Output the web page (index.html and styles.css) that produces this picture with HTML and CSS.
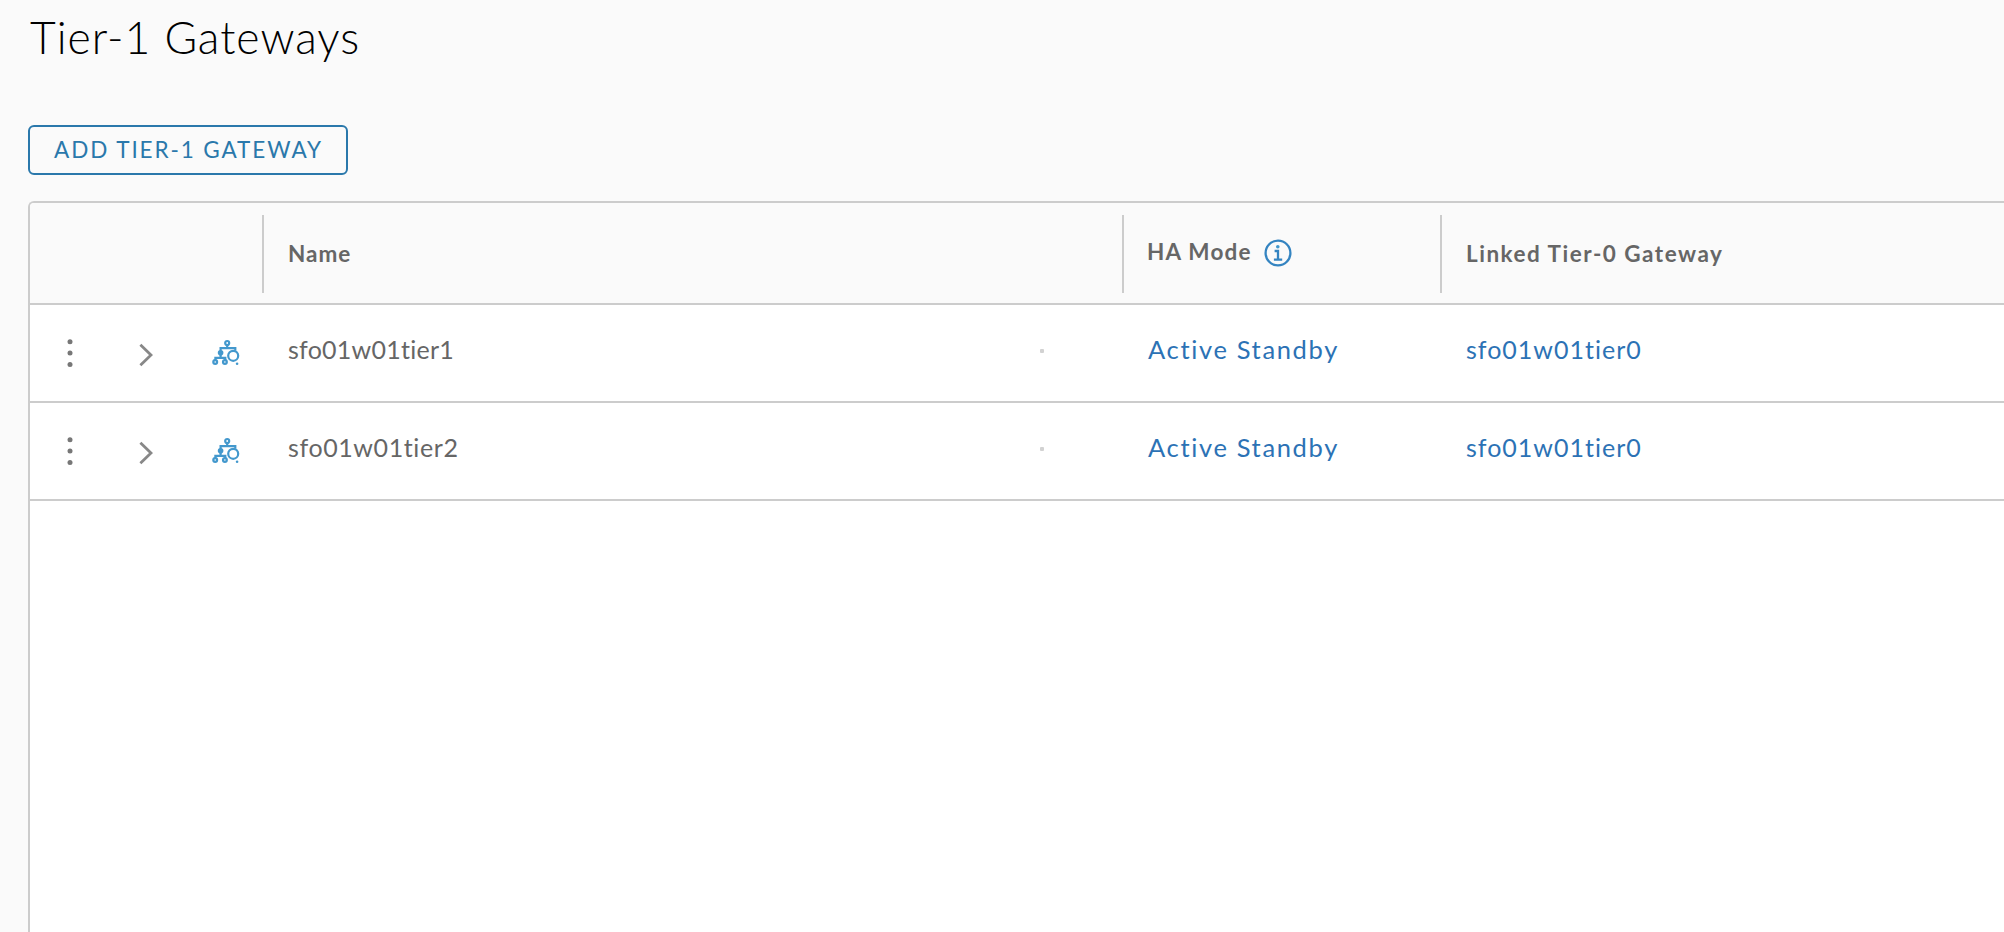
FILE: index.html
```html
<!DOCTYPE html>
<html lang="en">
<head>
<meta charset="utf-8">
<title>Tier-1 Gateways</title>
<link rel="stylesheet" href="styles.css">
</head>
<body>
<svg class="defs" width="0" height="0" aria-hidden="true">
  <symbol id="dots" viewBox="0 0 8 30"><circle cx="4" cy="3.7" r="2.5"/><circle cx="4" cy="15" r="2.5"/><circle cx="4" cy="26.4" r="2.5"/></symbol>
  <symbol id="chevron" viewBox="0 0 14 24"><path d="M1.4 1.8 12 12 1.4 22.2"/></symbol>
  <symbol id="topology" viewBox="0 0 28 28">
    <circle cx="15.2" cy="4" r="2"/>
    <path d="M15.2 6V9.3M8.6 12.5V9.1H23.3V11.8M8.6 16V19M3.4 21.5V18.9H13.3V21.5"/>
    <circle class="solid" cx="8.6" cy="13.7" r="2.8"/>
    <circle cx="3.2" cy="23" r="1.9"/><circle cx="12.9" cy="23" r="1.9"/>
    <circle cx="21.2" cy="16.8" r="5"/>
    <circle class="solid" cx="25.1" cy="24.7" r="1.3"/>
  </symbol>
</svg>
<main class="page">
  <h1 class="title">Tier-1 Gateways</h1>
  <button class="add-button"><span>ADD TIER-1 GATEWAY</span></button>
  <section class="grid">
    <div class="row head">
      <div class="actions"></div>
      <div class="cell"><span class="name-label">Name</span></div>
      <div class="cell raised"><span class="mode-label">HA Mode</span>
        <svg class="info" viewBox="0 0 28 28"><circle cx="14" cy="14" r="12.4"/><circle class="solid" cx="13.8" cy="7.8" r="1.8"/><path d="M10.6 12H14V20.6M9.9 20.7H18.2"/></svg>
      </div>
      <div class="cell"><span class="linked-label">Linked Tier-0 Gateway</span></div>
    </div>
    <div class="row">
      <div class="actions"><svg class="dots"><use href="#dots"/></svg><svg class="chevron"><use href="#chevron"/></svg><svg class="topology"><use href="#topology"/></svg></div>
      <div class="cell name first"><span>sfo01w01tier1</span><i class="mark"></i></div>
      <div class="cell"><a class="mode">Active Standby</a></div>
      <div class="cell"><a class="linked">sfo01w01tier0</a></div>
    </div>
    <div class="row">
      <div class="actions"><svg class="dots"><use href="#dots"/></svg><svg class="chevron"><use href="#chevron"/></svg><svg class="topology"><use href="#topology"/></svg></div>
      <div class="cell name"><span>sfo01w01tier2</span><i class="mark"></i></div>
      <div class="cell"><a class="mode">Active Standby</a></div>
      <div class="cell"><a class="linked">sfo01w01tier0</a></div>
    </div>
  </section>
</main>
</body>
</html>
```
FILE: styles.css
```css
* { box-sizing: border-box; }
body { margin: 0; background: #fafafa; font-family: Lato, "Open Sans", sans-serif; color: #666; overflow: hidden; }
.defs { display: block; }
.page { height: 932px; padding: 9px 0 0 28px; display: flex; flex-direction: column; align-items: flex-start; }
.title { margin: 0 0 0 2px; height: 56px; line-height: 56px; font-size: 44.5px; font-weight: 300; letter-spacing: 1px; color: #000; white-space: nowrap; }
.add-button { margin: 60px 0 26px; width: 320px; height: 50px; padding: 0 0 0 1px; border: 2px solid #2a78ab; border-radius: 6px; background: transparent; color: #2a78ab; font: 400 22.5px/46px Lato, sans-serif; letter-spacing: 1.9px; white-space: nowrap; }
.grid { width: 1976px; flex: 1; border: 2px solid #ccc; border-width: 2px 0 0 2px; border-radius: 6px 0 0 0; background: #fff; overflow: hidden; }
.row { display: grid; grid-template-columns: 232px 860px 318px 1fr; height: 98px; border-bottom: 2px solid #ccc; }
.head { height: 102px; background: #fafafa; padding: 12px 0 10px; font-size: 22.5px; font-weight: 700; }
.cell { display: flex; align-items: center; padding: 0 0 8px 26px; font-size: 25px; white-space: nowrap; }
.head .cell { height: 78px; border-left: 2px solid #ccc; padding: 0 0 1px 24px; font-size: 22.5px; }
.head .raised { padding: 0 0 2px 23px; }
.raised .mode-label { margin-top: -4px; }
.name { padding-right: 78px; justify-content: space-between; }
.mark { width: 4px; height: 4px; border-radius: 1px; background: #d2d2d2; margin-top: 4px; }
.mode, .linked { color: #2c72b5; }
.name-label { letter-spacing: 1px; }
.mode-label { letter-spacing: 1.2px; }
.linked-label { letter-spacing: 1.5px; }
.name span { letter-spacing: .6px; }
.first span { letter-spacing: .25px; }
.mode { font-size: 25.5px; letter-spacing: 1.65px; }
.linked { letter-spacing: 1px; }
.actions { display: flex; align-items: center; padding-left: 36px; }
.dots { width: 8px; height: 30px; fill: #777; }
.chevron { width: 14px; height: 24px; margin: 4px 0 0 65px; fill: none; stroke: #888; stroke-width: 2.8; }
.topology { width: 28px; height: 28px; margin: 0 0 0 59px; fill: none; stroke: #4398cd; stroke-width: 2.2; }
.solid { fill: currentColor; stroke: none; color: #4398cd; }
.info { width: 28px; height: 28px; margin-left: 12px; fill: none; stroke: #3484c1; stroke-width: 2.3; }
```
